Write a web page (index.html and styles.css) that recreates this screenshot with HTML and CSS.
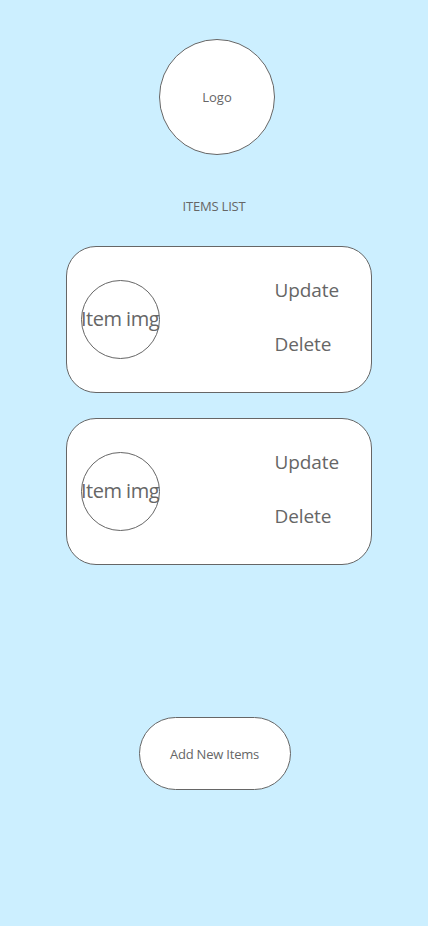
FILE: index.html
```html
<!DOCTYPE html>
<html lang="en">
<head>
<meta charset="utf-8">
<title>Items List</title>
<link rel="stylesheet" href="styles.css">
</head>
<body>
<main class="page">
  <div class="logo">Logo</div>
  <h1 class="title">ITEMS LIST</h1>
  <section class="list">
    <div class="card">
      <div class="thumb"><span>Item img</span></div>
      <div class="actions">
        <span class="action">Update</span>
        <span class="action">Delete</span>
      </div>
    </div>
    <div class="card">
      <div class="thumb"><span>Item img</span></div>
      <div class="actions">
        <span class="action">Update</span>
        <span class="action">Delete</span>
      </div>
    </div>
  </section>
  <button class="add-btn">Add New Items</button>
</main>
</body>
</html>
```
FILE: styles.css
```css
html, body {
  margin: 0;
  padding: 0;
}
body {
  background: #ccefff;
  font-family: "Open Sans", "Noto Sans", "Liberation Sans", sans-serif;
  color: #666;
  min-height: 926px;
}
.page {
  display: flex;
  flex-direction: column;
  align-items: center;
  padding-top: 39px;
}
.logo {
  width: 116px;
  height: 116px;
  box-sizing: border-box;
  border: 1px solid #666;
  border-radius: 50%;
  background: #fff;
  display: flex;
  align-items: center;
  justify-content: center;
  font-size: 13px;
  margin-left: 6px;
}
.title {
  margin: 42px 0 0 0;
  font-size: 13px;
  font-weight: 400;
  line-height: 18px;
  letter-spacing: -0.2px;
}
.list {
  margin-top: 31px;
  display: flex;
  flex-direction: column;
  gap: 25px;
  margin-left: 9px;
}
.card {
  width: 306px;
  height: 147px;
  box-sizing: border-box;
  border: 1px solid #666;
  border-radius: 30px;
  background: #fff;
  display: flex;
  align-items: center;
  padding-left: 14px;
}
.thumb {
  width: 79px;
  height: 79px;
  flex: none;
  box-sizing: border-box;
  border: 1px solid #666;
  border-radius: 50%;
  display: flex;
  align-items: center;
  justify-content: center;
  white-space: nowrap;
  font-size: 20px;
  letter-spacing: -0.5px;
}
.thumb span {
  margin-top: -3px;
}
.actions {
  margin-left: 115px;
  margin-top: -6px;
  display: flex;
  flex-direction: column;
  gap: 30px;
}
.action {
  font-size: 19px;
  line-height: 24px;
  letter-spacing: -0.1px;
}
.add-btn {
  margin-top: 152px;
  width: 152px;
  height: 73px;
  box-sizing: border-box;
  border: 1px solid #666;
  border-radius: 37px;
  background: #fff;
  font-family: inherit;
  color: #666;
  font-size: 13px;
  letter-spacing: -0.2px;
  margin-left: 1px;
  padding: 0;
}
```
